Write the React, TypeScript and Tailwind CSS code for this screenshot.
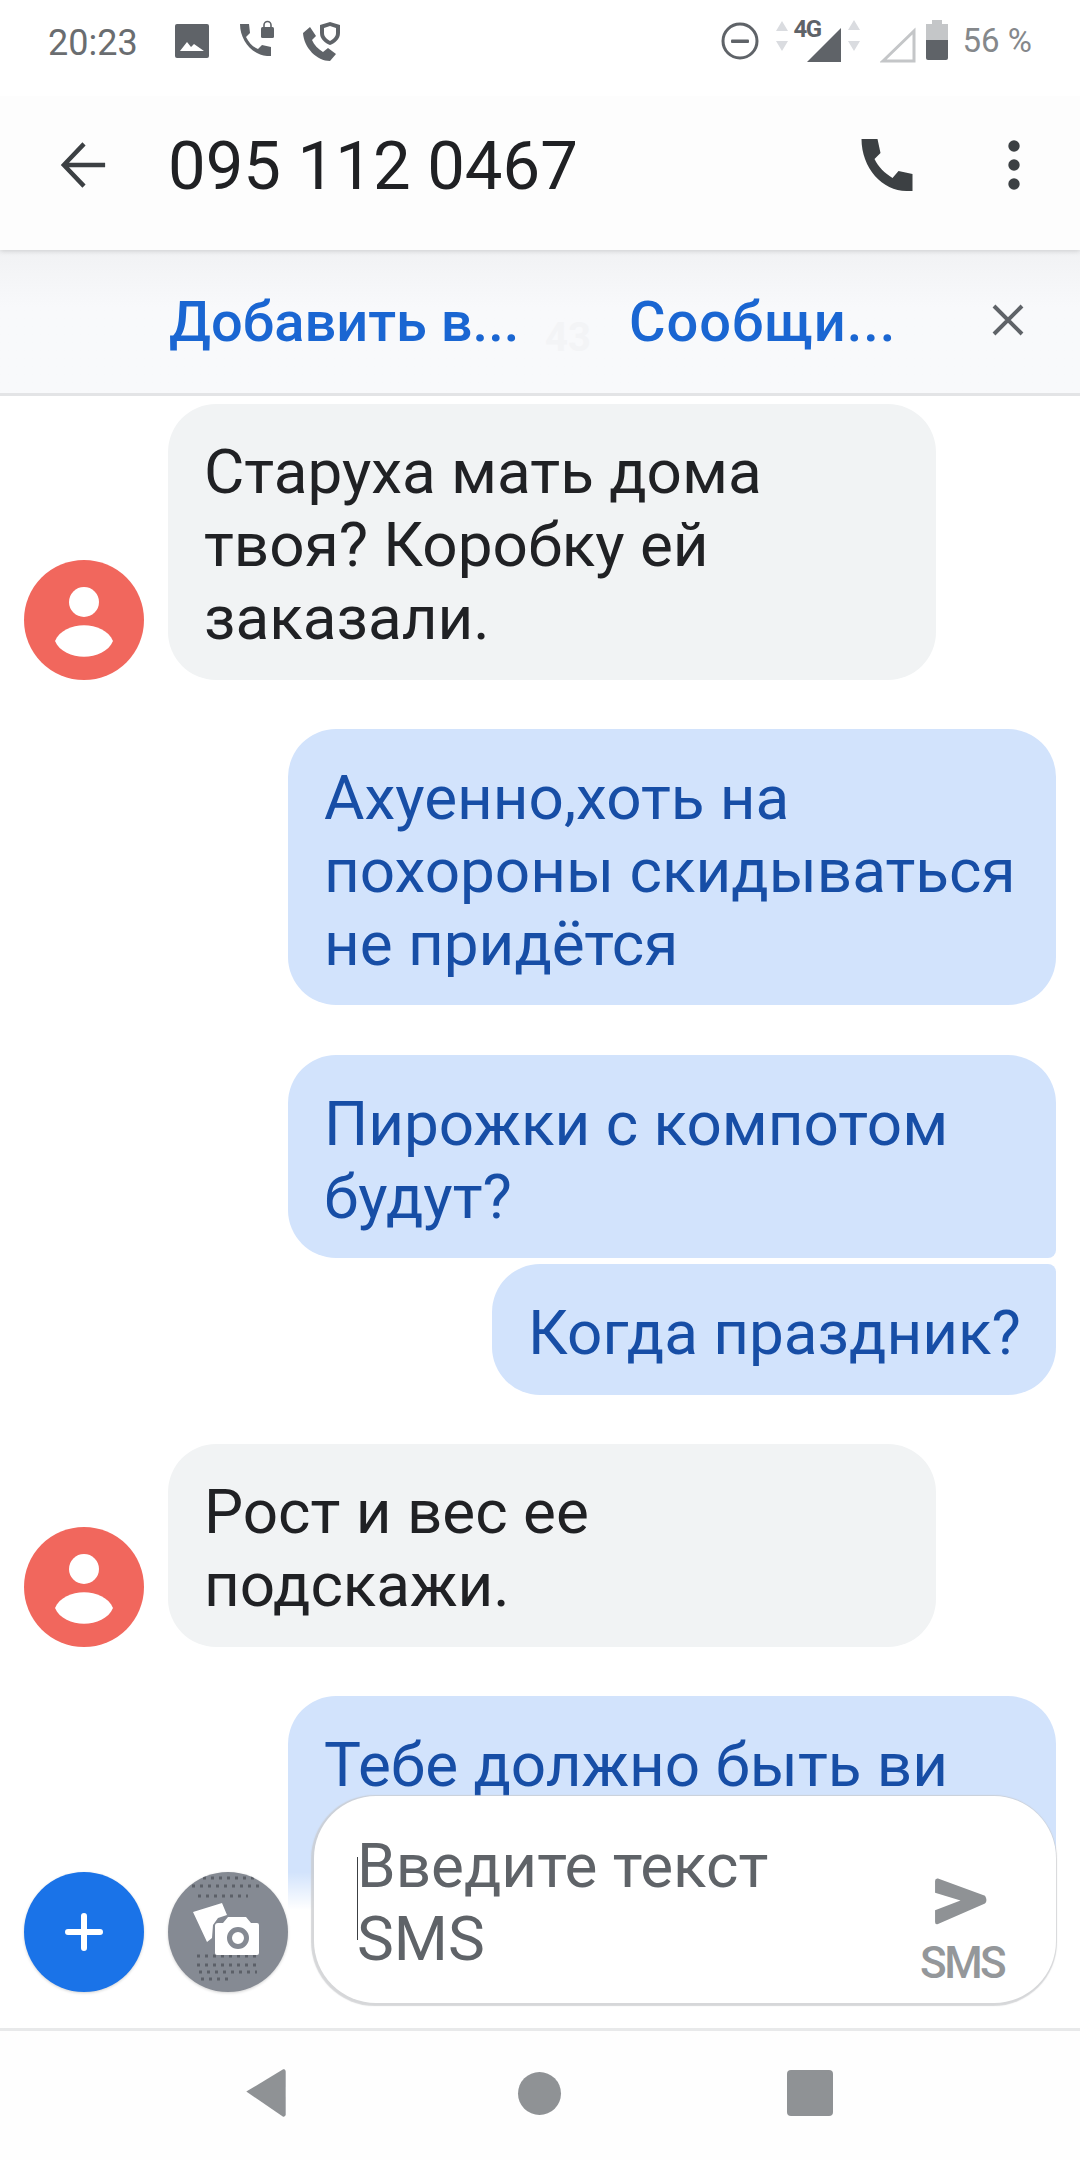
const roboto = { fontFamily: 'Roboto, sans-serif' }

function Avatar() {
  return (
    <svg viewBox="0 0 120 120" className="w-[120px] h-[120px] shrink-0">
      <circle cx="60" cy="60" r="60" fill="#f1675d" />
      <circle cx="60" cy="42" r="15" fill="#fff" />
      <path d="M31 81C40 60 80 60 89 81C80 102 40 102 31 81Z" fill="#fff" />
    </svg>
  )
}

function Incoming({ lines, className }: { lines: string[]; className: string }) {
  return (
    <div className={`flex items-end gap-6 pl-6 ${className}`}>
      <Avatar />
      <div className="w-[768px] rounded-[48px] bg-[#f1f3f4] pl-[36px] pt-[31px] pb-[26px] text-[62px] leading-[73px] text-[#202124]">
        {lines.map((l) => (
          <div key={l}>{l}</div>
        ))}
      </div>
    </div>
  )
}

function StatusBar() {
  return (
    <div className="relative z-30 h-[96px] bg-white flex items-start justify-between pl-[48px] pr-[48px]">
      <div className="flex items-start">
        <span className="text-[36px] leading-[40px] text-[#6a6d70] w-[127px] mt-[23px]">20:23</span>
        <svg viewBox="0 0 34 34" className="w-[34px] h-[34px] mt-[24px]">
          <rect width="34" height="34" rx="2" fill="#5f6368" />
          <path d="M5 27l7-9 4 5 3-3 10 7z" fill="#fff" />
        </svg>
        <svg viewBox="0 0 36 40" className="w-[36px] h-[40px] ml-[30px] mt-[20px]" fill="#5f6368">
          <path d="M1 4h9l1 9-4 4c3 6 7 10 12 12l4-4 9 2v9h-4C13 35 1 20 1 4z" />
          <rect x="22" y="7" width="13" height="11" rx="1.5" />
          <path d="M25 8V5a3.500 3.500 0 017 0v3" fill="none" stroke="#5f6368" strokeWidth="1.6" />
        </svg>
        <svg viewBox="0 0 42 42" className="w-[42px] h-[42px] ml-[27px] mt-[20px]" fill="#5f6368">
          <path d="M1 13l7-6 6 9-4 4c2 5 6 9 11 12l5-4 8 6-6 7C15 41 2 28 1 13z" />
          <path d="M28 2l10 3v8c0 6-5 10-10 12-5-2-10-6-10-12V5z" />
          <path d="M28 6l6 2v5c0 4-3 6-6 8-3-2-6-4-6-8V8z" fill="#fff" />
        </svg>
      </div>
      <div className="flex items-start">
        <svg viewBox="0 0 38 38" className="w-[38px] h-[38px] mt-[22px]">
          <circle cx="19" cy="19" r="17" fill="none" stroke="#5f6368" strokeWidth="3" />
          <rect x="10" y="17.500" width="18" height="3.500" rx="1" fill="#5f6368" />
        </svg>
        <div className="relative w-[84px] h-[44px] ml-[17px] mt-[20px]">
          <svg viewBox="0 0 84 44" className="w-[84px] h-[44px]">
            <path d="M6 1l6 10H0zM6 31l6-10H0z" fill="#dadce0" />
            <path d="M78 0l6 10H72zM78 31l6-10H72z" fill="#dadce0" />
            <path d="M31 42L65 8v34z" fill="#5f6368" />
          </svg>
          <span className="absolute left-[18px] top-[-3px] text-[24px] leading-none font-bold text-[#5f6368] tracking-[-1.5px]">
            4G
          </span>
        </div>
        <svg viewBox="0 0 36 36" className="w-[36px] h-[36px] ml-[20px] mt-[27px]">
          <path d="M3 34L34 4v30z" fill="none" stroke="#c4c6c8" strokeWidth="3" />
        </svg>
        <svg viewBox="0 0 22 40" className="w-[22px] h-[40px] ml-[10px] mt-[20px]">
          <path d="M6 0h10v4h6v16H0V4h6z" fill="#c4c6c8" />
          <path d="M0 20h22v18a2 2 0 01-2 2H2a2 2 0 01-2-2z" fill="#5f6368" />
        </svg>
        <span className="text-[33px] leading-[40px] text-[#85888b] ml-[15px] mt-[21px] whitespace-pre">56 %</span>
      </div>
    </div>
  )
}

function Header() {
  return (
    <div className="relative z-20 h-[154px] bg-[#fdfdfd] shadow-[0_1px_5px_rgba(0,0,0,0.16)] flex items-center pb-[16px]">
      <svg viewBox="0 0 50 50" className="w-[48px] h-[50px] ml-[60px] shrink-0">
        <path d="M47 25H6M25 3L4 25l21 22" fill="none" stroke="#3c4043" strokeWidth="4.600" />
      </svg>
      <span className="ml-[60px] mt-[3px] text-[67px] text-[#202124] leading-none">095 112 0467</span>
      <svg viewBox="0 0 54 54" className="w-[55px] h-[54px] ml-auto shrink-0">
        <path d="M1 1h16l3 14-6 6c4 8 10 14 18 19l6-7 14 3v17h-6C22 53 1 30 1 1z" fill="#3c4043" />
      </svg>
      <svg viewBox="0 0 12 50" className="w-[12px] h-[50px] ml-[93px] mr-[60px] shrink-0" fill="#3c4043">
        <circle cx="6" cy="6" r="5.700" />
        <circle cx="6" cy="25" r="5.700" />
        <circle cx="6" cy="44" r="5.700" />
      </svg>
    </div>
  )
}

function Banner() {
  return (
    <div className="relative z-10 h-[146px] bg-gradient-to-b from-[#f1f2f4] to-[#f8f9fb] to-40% border-b-[3px] border-[#e3e4e6] flex items-center text-[56px] font-medium text-[#1a66d2]">
      <span className="ml-[169px] w-[347px] whitespace-nowrap">Добавить в...</span>
      <span className="absolute left-[545px] top-[68px] text-[40px] leading-none font-bold text-[#f3f4f6]">43</span>
      <span className="ml-[113px] whitespace-nowrap tracking-[1px]">Сообщи...</span>
      <svg viewBox="0 0 32 32" className="w-[32px] h-[32px] ml-auto mr-[56px] mt-[-3px] shrink-0">
        <path d="M2 2l28 28M30 2L2 30" stroke="#5f6368" strokeWidth="4" />
      </svg>
    </div>
  )
}

function Composer() {
  return (
    <div className="absolute left-0 right-0 top-[1796px] h-[234px] z-10">
      {/* fade behind the text field */}
      <div className="absolute left-0 top-[76px] right-0 h-[158px] bg-gradient-to-b from-transparent to-white to-[24%]" />
      <div className="absolute left-0 top-[76px] w-[288px] h-[158px] bg-white" />
      <div className="relative flex items-end pl-6 pr-6 gap-6 h-[207px]">
        <div className="w-[120px] h-[120px] rounded-full bg-[#1a73e8] shadow-[0_1px_3px_rgba(0,0,0,0.18)] flex items-center justify-center mb-[11px] shrink-0">
          <svg viewBox="0 0 38 38" className="w-[38px] h-[38px]">
            <path d="M19 3v32M3 19h32" stroke="#fff" strokeWidth="6" strokeLinecap="round" />
          </svg>
        </div>
        <div className="relative w-[120px] h-[120px] rounded-full bg-[#858a93] shadow-[0_1px_3px_rgba(0,0,0,0.18)] mb-[11px] shrink-0 overflow-hidden">
          <svg viewBox="0 0 120 120" className="absolute inset-0 w-[120px] h-[120px]">
            <path d="M27 6h62M24 14h70M30 24h50M29 84h62M29 93h60M31 100h58M33 107h28" stroke="#5c6068" strokeWidth="3" strokeDasharray="3 5" />
            <path d="M25 40l29-9 5 12-9 3-5 7-1 13-5 4z" fill="#fff" />
            <path d="M50 51h5l5-6h18l5 6h6a2 2 0 012 2v28a2 2 0 01-2 2H49a2 2 0 01-2-2V54a3 3 0 013-3z" fill="#fff" />
            <circle cx="70" cy="66" r="8.500" fill="none" stroke="#858a93" strokeWidth="5" />
          </svg>
        </div>
        <div className="relative ml-[2px] w-[742px] h-[207px] rounded-[62px] bg-white shadow-[-1px_1px_1px_2px_rgba(200,202,204,0.75)] shrink-0">
          <div className="absolute left-[43px] top-[33px] text-[62px] leading-[73px] text-[#5f6368]">
            <div>Введите текст</div>
            <div>SMS</div>
          </div>
          <div className="absolute left-[43px] top-[61px] w-[1px] h-[83px] bg-[#3c4043]" />
          <svg viewBox="0 0 54 48" className="absolute left-[620px] top-[82px] w-[55px] h-[47px]">
            <path d="M3 .5L51 18Q54 23 51 26L3 47Q0 48 0 45V33L26 23L0 15V3Q0 0 3 .5Z" fill="#8f9295" />
          </svg>
          <span className="absolute left-[606px] top-[143px] text-[44px] leading-[48px] text-[#94979a] font-medium tracking-[-2.5px]">SMS</span>
        </div>
      </div>
    </div>
  )
}

function NavBar() {
  return (
    <div className="absolute left-0 right-0 top-[2028px] h-[132px] z-20 bg-[#fefefe] border-t-[3px] border-[#e8e9ea] flex items-center">
      <svg viewBox="0 0 42 50" className="w-[41px] h-[48px] ml-[245px] mt-[-5px] shrink-0">
        <path d="M1 23.500L39 .5c1-.5 3 0 3 2v45c0 2-2 2.500-3 2z" fill="#8f9295" />
      </svg>
      <div className="w-[43px] h-[43px] rounded-full bg-[#8f9295] ml-[232px] mt-[-5px] shrink-0" />
      <div className="w-[46px] h-[46px] rounded-[4px] bg-[#8f9295] ml-[226px] mt-[-5px] shrink-0" />
    </div>
  )
}

export default function App() {
  return (
    <div className="relative w-[1080px] h-[2160px] bg-white overflow-hidden" style={roboto}>
      <StatusBar />
      <Header />
      <Banner />
      <div>
        <Incoming
          className="mt-[8px]"
          lines={['Старуха мать дома', 'твоя? Коробку ей', 'заказали.']}
        />
        <div className="mt-[49px] flex justify-end pr-6">
          <div className="w-[768px] rounded-[48px] bg-[#d2e3fc] pl-[36px] pt-[32px] pb-[25px] text-[62px] leading-[73px] text-[#174ea6]">
            <div>Ахуенно,хоть на</div>
            <div>похороны скидываться</div>
            <div>не придётся</div>
          </div>
        </div>
        <div className="mt-[50px] flex flex-col items-end pr-6 gap-[6px]">
          <div className="w-[768px] rounded-[48px] rounded-br-[8px] bg-[#d2e3fc] pl-[36px] pt-[32px] pb-[25px] text-[62px] leading-[73px] text-[#174ea6]">
            <div>Пирожки с компотом</div>
            <div>будут?</div>
          </div>
          <div className="w-[564px] rounded-[48px] rounded-tr-[8px] bg-[#d2e3fc] pl-[36px] pt-[32px] pb-[26px] text-[62px] leading-[73px] text-[#174ea6]">
            Когда праздник?
          </div>
        </div>
        <Incoming className="mt-[49px]" lines={['Рост и вес ее', 'подскажи.']} />
        <div className="mt-[49px] flex justify-end pr-6">
          <div className="w-[768px] h-[300px] rounded-t-[48px] bg-[#d2e3fc] pl-[36px] pt-[32px] text-[62px] leading-[73px] text-[#174ea6]">
            Тебе должно быть ви
          </div>
        </div>
      </div>
      <Composer />
      <NavBar />
    </div>
  )
}
